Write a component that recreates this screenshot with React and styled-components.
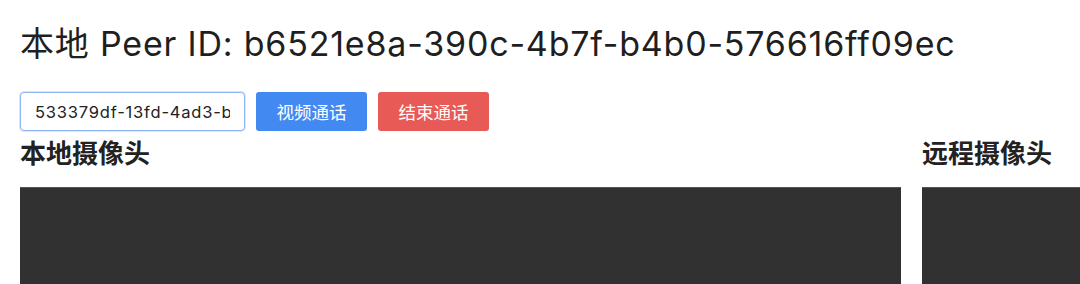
import React from "react";
import styled, { createGlobalStyle } from "styled-components";

const Global = createGlobalStyle`
  html, body { margin: 0; padding: 0; overflow: hidden; background: #fff; }
  body { font-family: Inter, "Noto Sans CJK SC", sans-serif; color: #222; }
`;

const Page = styled.div`
  padding: 24px 20px 0 20px;
  width: 1600px;
`;

const Title = styled.h1`
  margin: 0 0 28px 0;
  font-size: 34px;
  font-weight: 400;
  line-height: 40px;
  letter-spacing: 0.8px;
  color: #1f1f1f;
  white-space: nowrap;
`;

const Controls = styled.div`
  display: flex;
  align-items: center;
  gap: 11px;
`;

const PeerInput = styled.input`
  box-sizing: border-box;
  width: 225px;
  height: 39px;
  padding: 0 14px;
  font-family: Inter, "Noto Sans CJK SC", sans-serif;
  font-size: 16.5px;
  letter-spacing: 0.8px;
  color: #222;
  border: 1.5px solid #8db6f2;
  border-radius: 4px;
  outline: none;
  box-shadow: 0 0 0 1px rgba(141, 182, 242, 0.35);
  background: #fff;
`;

const Button = styled.button`
  box-sizing: border-box;
  width: 111px;
  height: 39px;
  border: none;
  border-radius: 3px;
  background: ${(p) => p.$bg};
  color: #fff;
  font-family: Inter, "Noto Sans CJK SC", sans-serif;
  font-size: 17.5px;
  cursor: pointer;
`;

const Videos = styled.div`
  display: flex;
  gap: 21px;
  margin-top: 8px;
`;

const Column = styled.div`
  display: flex;
  flex-direction: column;
  width: ${(p) => p.$w}px;
  flex: none;
`;

const SubTitle = styled.h2`
  margin: 0 0 18px 0;
  font-size: 26px;
  line-height: 30px;
  font-weight: 700;
  color: #222;
`;

const VideoBox = styled.div`
  height: 360px;
  background: #313131;
  border-top: 1px solid #555;
`;

export default function App() {
  return (
    <>
      <Global />
      <Page>
        <Title>本地 Peer ID: b6521e8a-390c-4b7f-b4b0-576616ff09ec</Title>
        <Controls>
          <PeerInput defaultValue="533379df-13fd-4ad3-b8e2-7c1a90f4d6e3" />
          <Button $bg="#4389f2">视频通话</Button>
          <Button $bg="#e85a55">结束通话</Button>
        </Controls>
        <Videos>
          <Column $w={881}>
            <SubTitle>本地摄像头</SubTitle>
            <VideoBox />
          </Column>
          <Column $w={640}>
            <SubTitle>远程摄像头</SubTitle>
            <VideoBox />
          </Column>
        </Videos>
      </Page>
    </>
  );
}
